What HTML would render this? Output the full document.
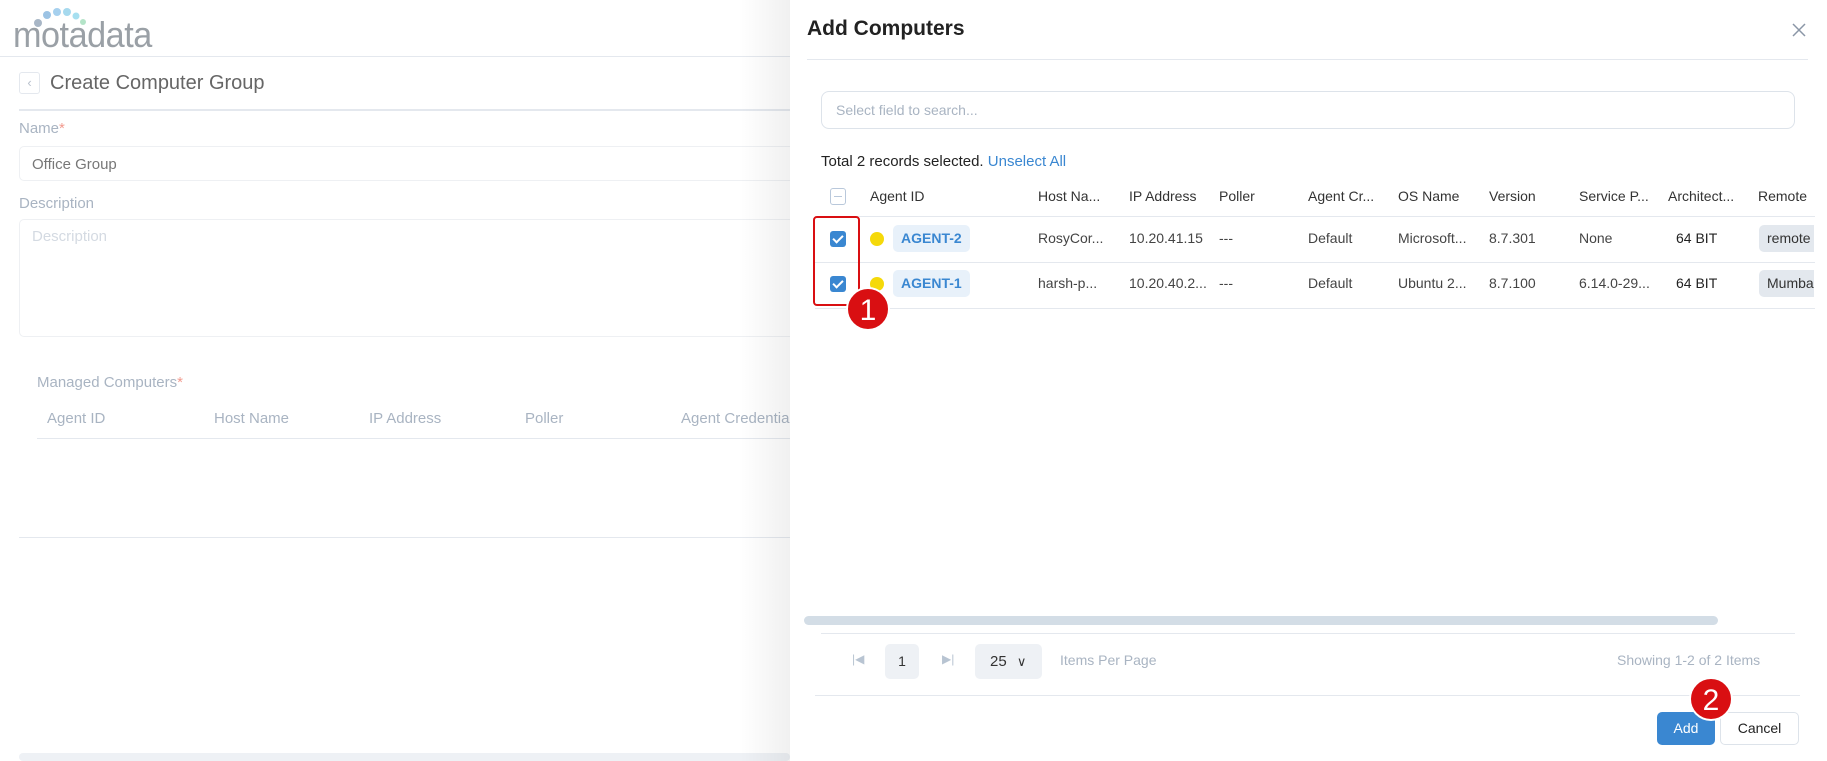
<!DOCTYPE html>
<html><head><meta charset="utf-8"><style>
*{box-sizing:border-box;margin:0;padding:0}
body{width:1827px;height:761px;overflow:hidden;background:#fff;font-family:"Liberation Sans",sans-serif;position:relative;color:#333}
.a{position:absolute;white-space:nowrap}
.l{color:#a9b4c2;font-size:15px}
.h{font-size:14px;color:#333}
.c{font-size:14px;color:#444}
.line{position:absolute;height:1px;background:#e4e8ee}
.cb{position:absolute;width:16px;height:16px;border-radius:3px;background:#3a87d1}
.cb:after{content:"";position:absolute;left:5px;top:2px;width:4px;height:8px;border:solid #fff;border-width:0 2px 2px 0;transform:rotate(45deg)}
.tag{position:absolute;background:#e8f1fa;color:#3a87d1;border-radius:5px;font-size:14px;font-weight:bold;line-height:27px;padding:0 8px}
.dot{position:absolute;width:14px;height:14px;border-radius:50%;background:#f5d90a}
.rt{position:absolute;background:#e3e8ee;border-radius:5px 0 0 5px;font-size:14px;line-height:27px;padding-left:8px;width:55px;overflow:hidden;color:#333}
.badge{position:absolute;width:44px;height:44px;border-radius:50%;background:#d90f12;color:#fff;font-size:30px;text-align:center;line-height:44px;border:2px solid #fff}
</style></head><body>
<!-- left page -->
<div class="a" style="left:13px;top:14px;font-size:36px;color:#9aa0a6;letter-spacing:-0.5px;transform:scaleX(0.95);transform-origin:left">motadata</div>
<svg class="a" style="left:30px;top:4px" width="60" height="26"><circle cx="8" cy="19" r="4" fill="#a8b6c6"/><circle cx="17" cy="11" r="4" fill="#9cc3e4"/><circle cx="27" cy="8" r="4" fill="#a6d0ee"/><circle cx="37" cy="8" r="4" fill="#a6d9ee"/><circle cx="46" cy="12" r="3.5" fill="#a6dff0"/><circle cx="53" cy="18" r="3" fill="#b4e4c8"/></svg>
<div class="line" style="left:0;top:56px;width:790px"></div>
<div class="a" style="left:19px;top:72px;width:21px;height:22px;border:1px solid #e4e8ee;border-radius:3px;color:#b8c0cc;font-size:13px;text-align:center;line-height:20px">‹</div>
<div class="a" style="left:50px;top:72px;font-size:20px;color:#666">Create Computer Group</div>
<div class="line" style="left:19px;top:109px;width:771px;height:2px"></div>
<div class="a l" style="left:19px;top:120px">Name<span style="color:#f29a8e">*</span></div>
<div class="a" style="left:19px;top:146px;width:790px;height:35px;border:1px solid #eef0f3;border-radius:5px;font-size:15px;color:#777;padding:9px 12px">Office Group</div>
<div class="a l" style="left:19px;top:195px">Description</div>
<div class="a" style="left:19px;top:219px;width:790px;height:118px;border:1px solid #eef0f3;border-radius:5px;font-size:15px;color:#d4dae2;padding:8px 12px">Description</div>
<div class="a l" style="left:37px;top:374px">Managed Computers<span style="color:#f29a8e">*</span></div>
<div class="a l" style="left:47px;top:410px">Agent ID</div>
<div class="a l" style="left:214px;top:410px">Host Name</div>
<div class="a l" style="left:369px;top:410px">IP Address</div>
<div class="a l" style="left:525px;top:410px">Poller</div>
<div class="a l" style="left:681px;top:410px">Agent Credential</div>
<div class="line" style="left:37px;top:438px;width:753px"></div>
<div class="line" style="left:19px;top:537px;width:771px"></div>
<div class="a" style="left:19px;top:753px;width:771px;height:8px;background:#eef1f5;border-radius:4px"></div>
<div class="a" style="left:740px;top:0;width:50px;height:761px;background:linear-gradient(90deg,rgba(0,0,0,0),rgba(0,0,0,0.06))"></div>
<!-- dialog -->
<div class="a" style="left:790px;top:0;width:1037px;height:761px;background:#fff;border-radius:0 14px 14px 0"></div>
<div class="a" style="left:807px;top:17px;font-size:21px;color:#222;font-weight:bold">Add Computers</div>
<svg class="a" style="left:1792px;top:23px" width="14" height="14"><path d="M1 1L13 13M13 1L1 13" stroke="#8a96a6" stroke-width="1.5"/></svg>
<div class="line" style="left:807px;top:59px;width:1001px"></div>
<div class="a" style="left:821px;top:91px;width:974px;height:38px;border:1px solid #dde3ea;border-radius:8px;font-size:14px;color:#a9b4c2;padding:10px 14px">Select field to search...</div>
<div class="a" style="left:821px;top:153px;font-size:15px;color:#222">Total 2 records selected. <span style="color:#3a87d1">Unselect All</span></div>
<div class="a" style="left:830px;top:188px;width:16px;height:17px;border:1px solid #b9c8db;border-radius:3px"><div style="margin:7px 3px;height:1px;background:#b9c8db"></div></div>
<div class="a h" style="left:870px;top:188px">Agent ID</div>
<div class="a h" style="left:1038px;top:188px">Host Na...</div>
<div class="a h" style="left:1129px;top:188px">IP Address</div>
<div class="a h" style="left:1219px;top:188px">Poller</div>
<div class="a h" style="left:1308px;top:188px">Agent Cr...</div>
<div class="a h" style="left:1398px;top:188px">OS Name</div>
<div class="a h" style="left:1489px;top:188px">Version</div>
<div class="a h" style="left:1579px;top:188px">Service P...</div>
<div class="a h" style="left:1668px;top:188px">Architect...</div>
<div class="a h" style="left:1758px;top:188px">Remote</div>
<div class="line" style="left:815px;top:216px;width:1000px"></div>
<div class="cb" style="left:830px;top:231px"></div>
<div class="dot" style="left:870px;top:232px"></div>
<div class="tag" style="left:893px;top:225px">AGENT-2</div>
<div class="a c" style="left:1038px;top:230px">RosyCor...</div>
<div class="a c" style="left:1129px;top:230px">10.20.41.15</div>
<div class="a c" style="left:1219px;top:230px">---</div>
<div class="a c" style="left:1308px;top:230px">Default</div>
<div class="a c" style="left:1398px;top:230px">Microsoft...</div>
<div class="a c" style="left:1489px;top:230px">8.7.301</div>
<div class="a c" style="left:1579px;top:230px">None</div>
<div class="a c" style="left:1676px;top:230px;color:#222">64 BIT</div>
<div class="rt" style="left:1759px;top:225px">remote</div>
<div class="line" style="left:815px;top:262px;width:1000px"></div>
<div class="cb" style="left:830px;top:276px"></div>
<div class="dot" style="left:870px;top:277px"></div>
<div class="tag" style="left:893px;top:270px">AGENT-1</div>
<div class="a c" style="left:1038px;top:275px">harsh-p...</div>
<div class="a c" style="left:1129px;top:275px">10.20.40.2...</div>
<div class="a c" style="left:1219px;top:275px">---</div>
<div class="a c" style="left:1308px;top:275px">Default</div>
<div class="a c" style="left:1398px;top:275px">Ubuntu 2...</div>
<div class="a c" style="left:1489px;top:275px">8.7.100</div>
<div class="a c" style="left:1579px;top:275px">6.14.0-29...</div>
<div class="a c" style="left:1676px;top:275px;color:#222">64 BIT</div>
<div class="rt" style="left:1759px;top:270px">Mumbai</div>
<div class="line" style="left:815px;top:308px;width:1000px"></div>
<div class="a" style="left:813px;top:216px;width:47px;height:90px;border:2px solid #d90f12;border-radius:4px"></div>
<div class="badge" style="left:846px;top:287px">1</div>
<div class="a" style="left:804px;top:616px;width:914px;height:9px;background:#d3dde6;border-radius:5px"></div>
<div class="line" style="left:821px;top:633px;width:974px"></div>
<div class="a" style="left:852px;top:652px;font-size:12px;color:#b8c4d2">|◀</div>
<div class="a" style="left:885px;top:644px;width:34px;height:35px;background:#eef1f5;border-radius:5px;font-size:14px;text-align:center;line-height:35px;color:#333">1</div>
<div class="a" style="left:942px;top:652px;font-size:12px;color:#b8c4d2">▶|</div>
<div class="a" style="left:975px;top:644px;width:67px;height:35px;background:#eef1f5;border-radius:5px;font-size:15px;line-height:35px;padding-left:15px;color:#333">25 <span style="font-size:13px;margin-left:6px">∨</span></div>
<div class="a" style="left:1060px;top:652px;font-size:14px;color:#a9b4c2">Items Per Page</div>
<div class="a" style="left:1617px;top:652px;font-size:14px;color:#a9b4c2">Showing 1-2 of 2 Items</div>
<div class="line" style="left:815px;top:695px;width:985px"></div>
<div class="a" style="left:1657px;top:712px;width:58px;height:33px;background:#3a87d1;border-radius:5px;color:#fff;font-size:14px;text-align:center;line-height:33px">Add</div>
<div class="a" style="left:1720px;top:712px;width:79px;height:33px;border:1px solid #dde3ea;border-radius:5px;color:#222;font-size:14px;text-align:center;line-height:31px">Cancel</div>
<div class="badge" style="left:1689px;top:677px">2</div>
</body></html>
